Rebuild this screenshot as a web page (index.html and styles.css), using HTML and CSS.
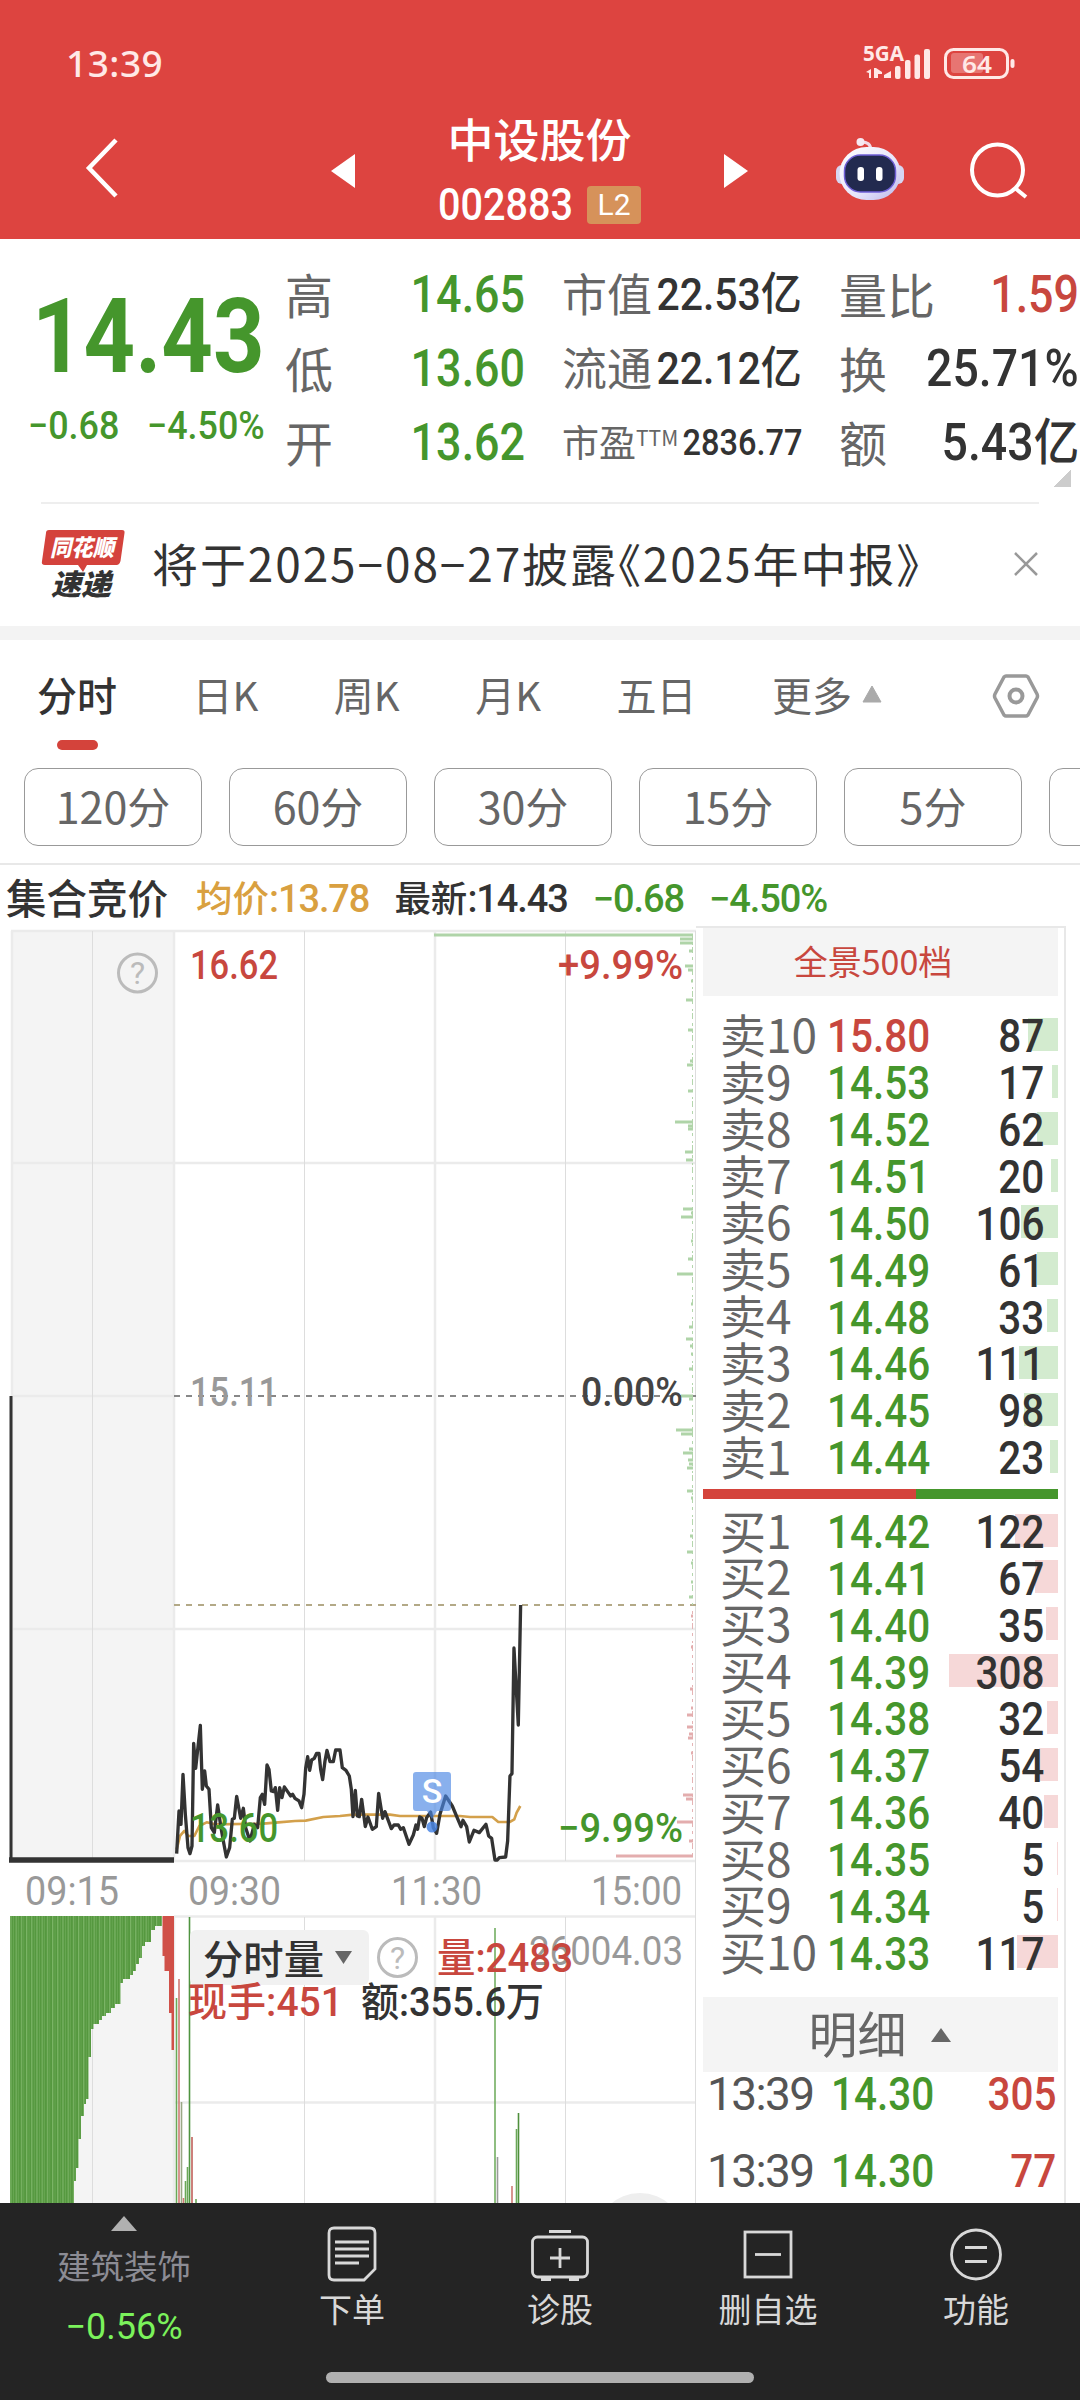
FILE: index.html
```html
<!DOCTYPE html>
<html lang="zh-CN">
<head>
    <meta charset="UTF-8">
    <meta name="viewport" content="width=device-width, initial-scale=1.0">
    <title>中设股份 002883</title>
    <link rel="stylesheet" href="styles.css">
</head>
<body>
<header class="header">
    <div class="statusbar">
        <span class="clock">13:39</span>
        <svg class="status-icons" width="156" height="40" viewBox="860 44 156 40">
            <text x="863" y="61" class="net" textLength="41" lengthAdjust="spacingAndGlyphs">5GA</text>
            <g fill="#ffe9e7">
                <path d="M866 72l5-3v9h-2v-5zM874 68h2l6 4v2h-4v4h-4z"/>
                <path d="M884 78v-3l7-4v7z"/>
                <rect x="895" y="66" width="5.5" height="13" rx="2"/>
                <rect x="905" y="60" width="5.5" height="19" rx="2"/>
                <rect x="914.500" y="54.500" width="5.500" height="24.500" rx="2"/>
                <rect x="924" y="49" width="6" height="30" rx="2"/>
                <rect x="1010.500" y="59" width="4" height="9" rx="2"/>
                <rect x="951" y="53" width="32" height="20" rx="3" opacity=".3"/>
            </g>
            <rect x="945.500" y="49.500" width="62" height="28" rx="8" fill="none" stroke="#ffe9e7" stroke-width="3"/>
            <text x="962" y="73" class="battery" textLength="30" lengthAdjust="spacingAndGlyphs">64</text>
        </svg>
    </div>
    <div class="titlebar">
        <svg class="back" width="40" height="64" viewBox="0 0 40 64"><path d="M34 3L7 31l27 28" fill="none" stroke="#fff" stroke-width="4.500"/></svg>
        <svg class="prev" width="24" height="34" viewBox="0 0 24 34"><path d="M24 0v34L0 17z" fill="#fff"/></svg>
        <div class="title">
            <div class="name">中设股份</div>
            <div class="code"><span class="num">002883</span><span class="level">L2</span></div>
        </div>
        <svg class="next" width="24" height="34" viewBox="0 0 24 34"><path d="M0 0v34l24-17z" fill="#fff"/></svg>
        <svg class="robot" width="70" height="66" viewBox="835 136 70 66">
            <defs>
                <linearGradient id="head" x1="0" y1="0" x2="1" y2="1">
                    <stop offset="0" stop-color="#fff"/>
                    <stop offset=".6" stop-color="#e6e4fa"/>
                    <stop offset="1" stop-color="#b9b6ea"/>
                </linearGradient>
            </defs>
            <path d="M860 142q11-1 11 9" fill="none" stroke="#f3d9e6" stroke-width="3"/>
            <circle cx="860.500" cy="142" r="4" fill="#f6e9f2"/>
            <rect x="836" y="165" width="12" height="19" rx="6" fill="#d6d6f2"/>
            <rect x="892" y="165" width="12" height="19" rx="6" fill="#d6d6f2"/>
            <rect x="839.500" y="147" width="61" height="53" rx="27" fill="url(#head)"/>
            <rect x="844.500" y="155" width="51" height="37" rx="16" fill="#222a4f" stroke="#6f5fd6" stroke-width="1.500"/>
            <rect x="857.500" y="167" width="6.500" height="14" rx="3" fill="#fff"/>
            <rect x="876" y="167" width="6.500" height="14" rx="3" fill="#fff"/>
        </svg>
        <svg class="search" width="62" height="62" viewBox="968 140 62 62">
            <circle cx="997.500" cy="170" r="25.500" fill="none" stroke="#fff" stroke-width="4"/>
            <path d="M1015 188l11 9" stroke="#fff" stroke-width="4"/>
        </svg>
    </div>
</header>

<!-- 行情 -->
<section class="quote">
    <div class="last">
        <div class="price num">14.43</div>
        <div class="change"><span class="num">−0.68</span><span class="num">−4.50%</span></div>
    </div>
    <div class="stats">
        <div class="stat"><label>高</label><b class="num green">14.65</b></div>
        <div class="stat mid"><label>市值</label><b class="num">22.53<i>亿</i></b></div>
        <div class="stat"><label>量比</label><b class="num red">1.59</b></div>
        <div class="stat"><label>低</label><b class="num green">13.60</b></div>
        <div class="stat mid"><label>流通</label><b class="num">22.12<i>亿</i></b></div>
        <div class="stat"><label>换</label><b class="num wide">25.71%</b></div>
        <div class="stat"><label>开</label><b class="num green">13.62</b></div>
        <div class="stat small"><label>市盈<sup>TTM</sup></label><b class="num">2836.77</b></div>
        <div class="stat"><label>额</label><b class="num wide">5.43<i>亿</i></b></div>
    </div>
    <span class="corner"></span>
</section>

<section class="notice">
    <svg width="84" height="70" viewBox="41 529 84 70">
        <path d="M49 530h73q3 0 2.500 3l-4 28q-1 4-4 4H87l-4 7-5-7H45q-4 0-3-4l4-28q0-3 3-3z" fill="#d4423c"/>
        <text x="50" y="556" class="logo-top" textLength="64" lengthAdjust="spacingAndGlyphs">同花顺</text>
        <text x="51" y="595" class="logo-bottom" textLength="60" lengthAdjust="spacingAndGlyphs">速递</text>
    </svg>
    <p>将于2025−08−27披露<span>《</span>2025年中报》</p>
    <svg class="close" width="24" height="24" viewBox="0 0 24 24"><path d="M1 1l22 22M23 1L1 23" stroke="#999" stroke-width="2.500"/></svg>
</section>

<nav class="tabs">
    <a class="active">分时</a><a>日K</a><a>周K</a><a>月K</a><a>五日</a>
    <a class="more">更多<svg width="20" height="18" viewBox="0 0 20 18"><path d="M10 1l9 16H1z" fill="#aaa" stroke="#aaa" stroke-linejoin="round"/></svg></a>
    <svg class="setting" width="48" height="44" viewBox="0 0 48 44">
        <path d="M14 2h20q1 0 2 1l9 17q1 2 0 4l-9 17q-1 1-2 1H14q-1 0-2-1L3 24q-1-2 0-4l9-17q1-1 2-1z" fill="none" stroke="#999" stroke-width="3.500"/>
        <circle cx="24" cy="22" r="6.500" fill="none" stroke="#999" stroke-width="4"/>
    </svg>
</nav>
<div class="chips">
    <span>120分</span><span>60分</span><span>30分</span><span>15分</span><span>5分</span><span></span>
</div>

<div class="info">
    <b>集合竞价</b>
    <span class="orange">均价<em>:13.78</em></span>
    <span>最新<em>:14.43</em></span>
    <span class="green"><em>−0.68</em></span>
    <span class="green"><em>−4.50%</em></span>
</div>

<main class="board">
    <svg class="chart" width="696" height="1278" viewBox="0 925 696 1278">
        <defs>
            <pattern id="stripes" width="5.200" height="10" patternUnits="userSpaceOnUse">
                <rect width="5.200" height="10" fill="#55983f"/>
                <rect width="1.200" height="10" fill="#7cb567"/>
                <rect x="2.600" width=".7" height="10" fill="#6cab56"/>
            </pattern>
        </defs>
        <!-- 集合竞价背景和网格 -->
        <path d="M11 930h162v930H11zM11 1916h162v287H11z" fill="#f4f4f4"/>
        <g class="grid">
            <path d="M11 930H696M11 1162H696M11 1395H174M11 1628H696M11 1860H696M174 1915.500H696M174 2101.500H696"/>
            <path d="M12 930V1860M174 930V1860M435 930V1860M174 1916V2203M435 1916V2203"/>
            <path class="thin" d="M92.500 930V1860M304.500 930V1860M565.500 930V1860M92.500 1916V2203M304.500 1916V2203M565.500 1916V2203M695.500 930V2203"/>
        </g>
        <path d="M174 1395H696" stroke="#888" stroke-width="2" stroke-dasharray="6 6"/>
        <path d="M174 1604H696" stroke="#b3a987" stroke-width="2" stroke-dasharray="6 6"/>
        <g id="depth"></g>

        <!-- 均价线和价格线 -->
        <g transform="translate(160 1680) scale(.3333)" fill="none" stroke-linejoin="round">
            <polyline stroke="#d3a04b" stroke-width="8" points="50,505 60,465 73,450 85,465 103,465 118,435 140,424 165,430 310,428 355,424 405,420 437,419 490,408 540,405 580,401 690,401 720,405 900,405 930,408 997,408 1015,423 1050,423 1063,415 1070,395 1081,375"/>
            <polyline stroke="#333" stroke-width="10" points="50,518 57,390 63,430 69,280 76,400 84,500 90,518 96,495 101,187 107,262 121,133 127,325 134,270 139,315 147,325 154,440 163,455 173,372 183,440 190,480 199,528 209,500 217,415 223,412 230,346 242,412 250,382 257,440 270,480 283,430 293,440 301,350 307,340 314,370 321,252 327,265 334,330 341,332 346,320 353,388 359,320 366,350 373,318 385,335 392,345 398,340 405,352 417,360 425,380 432,340 437,262 443,227 449,268 455,237 463,232 470,217 477,217 482,265 488,296 495,240 501,208 510,242 520,242 527,207 540,207 547,260 558,268 568,285 574,325 579,407 586,328 592,405 598,407 605,355 616,437 624,408 637,445 649,437 656,337 668,412 675,392 694,443 702,432 715,432 722,445 730,440 747,490 760,462 768,432 773,445 779,408 786,412 793,437 800,410 812,393 820,440 830,457 840,400 857,345 877,375 903,437 909,418 920,437 928,483 942,448 958,455 978,430 986,465 995,472 1005,537 1012,537 1018,530 1037,528 1043,480 1050,285 1056,278 1062,-99 1075,132 1082,-228"/>
        </g>
        <path d="M11 1395V1859" stroke="#333" stroke-width="3"/>
        <path d="M9 1859H174" stroke="#333" stroke-width="5.500"/>

        <!-- 卖出标记 -->
        <g fill="#4a86e4">
            <path d="M416 1771h32q3 0 3 3v33q0 3-3 3h-11l-5 8-5-8h-11q-3 0-3-3v-33q0-3 3-3z" opacity=".65"/>
            <circle cx="432" cy="1826" r="5.500" opacity=".85"/>
        </g>
        <text x="432" y="1802" class="mark">S</text>

        <g class="label">
            <text x="190" y="978" textLength="88" lengthAdjust="spacingAndGlyphs" fill="#c8473e">16.62</text>
            <text x="558" y="978" textLength="125" lengthAdjust="spacingAndGlyphs" fill="#c8473e">+9.99%</text>
            <text x="190" y="1405" textLength="88" lengthAdjust="spacingAndGlyphs" fill="#999">15.11</text>
            <text x="581" y="1405" textLength="102" lengthAdjust="spacingAndGlyphs" fill="#444">0.00%</text>
            <text x="190" y="1841" textLength="88" lengthAdjust="spacingAndGlyphs" fill="#45962c">13.60</text>
            <text x="558" y="1841" textLength="125" lengthAdjust="spacingAndGlyphs" fill="#45962c">−9.99%</text>
        </g>
        <g class="axis">
            <text x="25" y="1904" textLength="94" lengthAdjust="spacingAndGlyphs">09:15</text>
            <text x="188" y="1904" textLength="93" lengthAdjust="spacingAndGlyphs">09:30</text>
            <text x="391" y="1904" textLength="91" lengthAdjust="spacingAndGlyphs">11:30</text>
            <text x="591" y="1904" textLength="91" lengthAdjust="spacingAndGlyphs">15:00</text>
        </g>
        <g class="help">
            <circle cx="137.500" cy="972" r="19"/>
            <text x="137.500" y="983">?</text>
        </g>

        <!-- 成交量 -->
        <path fill="url(#stripes)" d="M10 1915V2203H74V2180H76V2167H78.500V2138H81V2115H84V2103H86V2098H88.500V2056H91V2028H93.500V2023H99V2019H102V2015H106V2012H111V2007H115V2003H120.500V1982H123V1978H130V1974H133V1970H136V1963H139V1957H142V1945H145V1941H151V1929H155V1925H162V1915z"/>
        <path d="M162.500 1915H174V2049H171.500V2012H169V1970H164.500V1955H162.500z" fill="#d05048"/>
        <g id="volume"></g>
        <circle cx="640" cy="2236" r="44" fill="#eee"/>

        <rect x="190" y="1929" width="179" height="55" rx="6" fill="#f1f1f1"/>
        <path d="M335 1950h17l-8.500 13z" fill="#666"/>
        <g class="help">
            <circle cx="397.500" cy="1956.500" r="19"/>
            <text x="397.500" y="1967.500">?</text>
        </g>
        <path d="M495 1927V2203" stroke="#6aa857" stroke-width="1.500"/>
        <g class="legend">
            <text x="203" y="1973" textLength="121" lengthAdjust="spacingAndGlyphs" fill="#333">分时量</text>
            <text x="529" y="1964" textLength="154" lengthAdjust="spacingAndGlyphs" class="max">26004.03</text>
            <text x="437" y="1971" textLength="136" lengthAdjust="spacingAndGlyphs" fill="#c8473e">量<tspan class="n">:2483</tspan></text>
            <text x="188" y="2015" textLength="155" lengthAdjust="spacingAndGlyphs" fill="#c8473e">现手<tspan class="n">:451</tspan></text>
            <text x="361" y="2015" textLength="183" lengthAdjust="spacingAndGlyphs" fill="#333">额<tspan class="n">:355.6</tspan>万</text>
        </g>
    </svg>

    <!-- 盘口 -->
    <aside class="book">
        <div class="panorama">全景500档</div>
        <div class="rows sell" id="sell"></div>
        <div class="ratio"><span></span></div>
        <div class="rows buy" id="buy"></div>
        <div class="detail-head"><span>明细</span><svg width="20" height="14" viewBox="0 0 20 14"><path d="M10 0l10 14H0z" fill="#666"/></svg></div>
        <div class="trade"><span class="time">13:39</span><b class="num green">14.30</b><b class="num red">305</b></div>
        <div class="trade"><span class="time">13:39</span><b class="num green">14.30</b><b class="num red">77</b></div>
    </aside>
</main>

<footer class="bottom">
    <div class="items">
        <div class="sector">
            <svg width="26" height="15" viewBox="0 0 26 15"><path d="M13 0l13 15H0z" fill="#b0b0b0"/></svg>
            <span>建筑装饰</span>
            <em>−0.56%</em>
        </div>
        <div class="item">
            <svg width="60" height="58" viewBox="0 0 60 58">
                <path d="M12 3h36q5 0 5 5v36l-11 11H12q-5 0-5-5V8q0-5 5-5z"/>
                <path d="M13 17h34M13 24h34M13 31h34M13 38h24"/>
            </svg>
            <span>下单</span>
        </div>
        <div class="item">
            <svg width="60" height="58" viewBox="0 0 60 58">
                <rect x="2.500" y="12" width="55" height="40" rx="5"/>
                <path d="M19 6.500h22M30 23v20M20 33h20M11 54.500h10M39 54.500h10"/>
            </svg>
            <span>诊股</span>
        </div>
        <div class="item">
            <svg width="60" height="58" viewBox="0 0 60 58">
                <rect x="7" y="7" width="46" height="45"/>
                <path d="M17 29.500h26"/>
            </svg>
            <span>删自选</span>
        </div>
        <div class="item">
            <svg width="60" height="58" viewBox="0 0 60 58">
                <circle cx="30" cy="29.500" r="24.500"/>
                <path d="M19 22.500h22M19 36.500h22"/>
            </svg>
            <span>功能</span>
        </div>
    </div>
    <div class="home"></div>
</footer>

<script>
    // 盘口数据: 价格, 数量, 柱宽
    const sell = [
        ["15.80", 87, 30], ["14.53", 17, 6], ["14.52", 62, 21], ["14.51", 20, 7], ["14.50", 106, 37],
        ["14.49", 61, 21], ["14.48", 33, 11], ["14.46", 111, 39], ["14.45", 98, 34], ["14.44", 23, 8]
    ];
    const buy = [
        ["14.42", 122, 43], ["14.41", 67, 23], ["14.40", 35, 12], ["14.39", 308, 109], ["14.38", 32, 11],
        ["14.37", 54, 19], ["14.36", 40, 14], ["14.35", 5, 1], ["14.34", 5, 1], ["14.33", 117, 41]
    ];

    function row(name, [price, count, width]) {
        const color = parseFloat(price) > 15.11 ? "red" : "green";
        return `<div class="row"><span class="bar" style="width:${width}px"></span><label>${name}</label><b class="num ${color}">${price}</b><b class="num count">${count}</b></div>`;
    }

    document.getElementById("sell").innerHTML = sell.map((r, i) => row("卖" + (10 - i), r)).join("");
    document.getElementById("buy").innerHTML = buy.map((r, i) => row("买" + (i + 1), r)).join("");

    // 右侧筹码: y, 长度
    const depthGreen = [
        [934, 259], [938, 13], [942, 13], [950, 4], [965, 8], [969, 5], [980, 2], [999, 7], [1029, 5], [1060, 3],
        [1064, 6], [1090, 5], [1121, 18], [1125, 5], [1128, 5], [1151, 8], [1159, 7], [1208, 10], [1212, 2],
        [1216, 12], [1240, 2], [1258, 5], [1273, 16], [1303, 2], [1326, 4], [1338, 7], [1345, 3], [1353, 2],
        [1368, 4], [1395, 12], [1398, 4], [1429, 17], [1433, 12], [1448, 4], [1452, 10], [1459, 5], [1463, 4],
        [1467, 6], [1490, 6], [1497, 2], [1535, 3], [1551, 6], [1562, 2], [1581, 2], [1596, 4]
    ];
    const depthRed = [
        [1615, 2], [1646, 2], [1688, 3], [1707, 2], [1714, 6], [1726, 6], [1733, 4], [1737, 5], [1752, 2],
        [1794, 10], [1798, 7], [1821, 16], [1840, 4], [1855, 77]
    ];
    const bars = (list, color) => list.map(([y, w]) => `<rect x="${693 - w}" y="${y - 1.5}" width="${w}" height="3" fill="${color}"/>`).join("");
    document.getElementById("depth").innerHTML =
        '<path d="M692.500 934V1604" stroke="#b4d6ad" stroke-dasharray="3 5 2 2 6 4"/>' +
        '<path d="M692.500 1610V1856" stroke="#e5b4b5" stroke-dasharray="3 5 2 2 6 4"/>' +
        bars(depthGreen, "#afd4a8") + bars(depthRed, "#e3adae");

    // 成交量柱: x, 顶部y, 颜色
    const volume = [
        [176.5, 1997, "#6aa857"], [179, 1978, "#cf7a74"], [181.5, 2101, "#9aa886"], [183.5, 2197, "#cf7a74"],
        [185.5, 2180, "#6aa857"], [187.5, 2166, "#6aa857"], [189.5, 1916, "#4f9440"], [192, 2136, "#c0605a"],
        [196, 2198, "#6aa857"], [497.5, 2156, "#9a9a9a"], [512, 2185, "#cf7a74"], [516.5, 2128, "#6aa857"],
        [518.5, 2112, "#4f8f3c"]
    ];
    document.getElementById("volume").innerHTML = volume.map(([x, y, c]) => `<path d="M${x} ${y}V2203" stroke="${c}" stroke-width="1.600"/>`).join("");
</script>
</body>
</html>
```
FILE: styles.css
```css
* {
    box-sizing: border-box;
}

body {
    margin: 0;
    width: 1080px;
    height: 2400px;
    overflow: hidden;
    display: flex;
    flex-direction: column;
    background: #fff;
    color: #333;
    font-family: "Noto Sans CJK SC", sans-serif;
    white-space: nowrap;
}

svg {
    display: block;
    flex: none;
}

.num,
em {
    font-family: Roboto, "Noto Sans CJK SC", sans-serif;
    font-weight: 500;
    font-style: normal;
}

/* 数字压窄 */
.num {
    display: inline-block;
    transform: scaleX(0.88);
    transform-origin: left;
}

.green {
    color: #45962c;
}

.red {
    color: #c8473e;
}

.orange {
    color: #d9a040;
}

/* 顶部 */
.header {
    height: 239px;
    flex: none;
    background: #dd4440;
    color: #fff;
}

.statusbar {
    height: 110px;
    padding: 44px 64px 0 66px;
    display: flex;
    justify-content: space-between;
}

.clock {
    font: 500 37px/38px "Noto Sans", sans-serif;
    letter-spacing: 0.5px;
    color: #ffe9e7;
}

.net {
    font: 700 21px "Noto Sans", sans-serif;
    fill: #ffe9e7;
}

.battery {
    font: 600 24px "Noto Sans", sans-serif;
    fill: #ffe9e7;
}

.titlebar {
    display: flex;
    align-items: flex-start;
    padding-left: 82px;
}

.back {
    margin-top: 27px;
}

.prev {
    margin: 44px 0 0 209px;
}

.title {
    width: 369px;
    display: flex;
    flex-direction: column;
    align-items: center;
}

.name {
    margin-top: -1px;
    font-size: 46px;
    font-weight: 500;
    line-height: 56px;
}

.code {
    display: flex;
    align-items: center;
    margin-top: 20px;
    height: 40px;
    font-size: 45px;
    line-height: 40px;
}

.code .num {
    width: 149px;
}

.level {
    width: 54px;
    height: 38px;
    border-radius: 4px;
    background: #d6925a;
    font: 400 30px/38px Roboto, sans-serif;
    text-align: center;
}

.next {
    margin-top: 44px;
}

.robot {
    margin: 26px 0 0 87px;
}

.search {
    margin: 30px 0 0 63px;
}

/* 行情 */
.quote {
    position: relative;
    height: 265px;
    flex: none;
    display: flex;
    padding-top: 19px;
}

.quote::after {
    content: "";
    position: absolute;
    left: 41px;
    right: 41px;
    bottom: 0;
    height: 2px;
    background: #eee;
}

.last {
    width: 285px;
    color: #45962c;
}

.price {
    margin: 24px 0 0 32px;
    font-size: 104px;
    font-weight: 700;
    line-height: 110px;
    transform: scaleX(0.865);
}

.change {
    display: flex;
    padding-left: 28px;
    margin-top: 14px;
    font-size: 39px;
    line-height: 40px;
}

.change .num {
    transform: scaleX(0.92);
}

.change .num:first-child {
    width: 119px;
}

.stats {
    display: grid;
    grid-template-columns: repeat(3, 239px);
    grid-auto-rows: 74px;
    column-gap: 38px;
}

.stat {
    display: flex;
    justify-content: space-between;
    align-items: center;
    font-size: 51px;
    line-height: 74px;
}

.stat label {
    width: 0;
    margin-top: -5px;
    font-size: 48px;
    color: #666;
}

.stat .num {
    position: relative;
    left: 1px;
    transform-origin: right;
}

.stat .wide {
    transform: scaleX(0.91);
}

.stat i {
    font-style: normal;
    font-size: 50px;
    line-height: 0;
}

.stat.mid,
.stat.mid label,
.stat.mid i {
    font-size: 45px;
}

.stat.mid .num {
    transform: scaleX(0.91);
}

.stat.small,
.stat.small label {
    font-size: 37px;
}

.stat sup {
    font-size: 21px;
    line-height: 0;
    vertical-align: 11px;
}

.corner {
    position: absolute;
    right: 9px;
    bottom: 17px;
    width: 17px;
    height: 17px;
    background: linear-gradient(135deg, transparent 50%, #ccc 50%);
}

.notice {
    height: 136px;
    flex: none;
    display: flex;
    align-items: flex-start;
    padding: 25px 42px 0 41px;
    border-bottom: 14px solid #f3f3f3;
}

.notice p {
    margin: 5px 0 0 27px;
    flex: 1;
    font-size: 46px;
    line-height: 56px;
    letter-spacing: 1.9px;
}

.notice p span {
    margin-left: -23px;
}

.notice .close {
    margin-top: 23px;
}

.logo-top {
    font: italic 900 23px "Noto Sans CJK SC", sans-serif;
    fill: #fff;
}

.logo-bottom {
    font: italic 900 29px "Noto Sans CJK SC", sans-serif;
    fill: #333;
}

/* 周期切换 */
.tabs {
    display: flex;
    align-items: flex-start;
    height: 128px;
    flex: none;
    padding: 29px 40px 0 37px;
    font-size: 40px;
    line-height: 50px;
    color: #666;
}

.tabs a {
    margin-right: 75.5px;
}

.tabs .active {
    position: relative;
    color: #333;
    font-weight: 500;
}

.tabs .active::after {
    content: "";
    position: absolute;
    left: 20px;
    top: 71px;
    width: 41px;
    height: 10px;
    border-radius: 5px;
    background: #d4433b;
}

.tabs .more {
    display: flex;
    align-items: center;
    gap: 10px;
    margin-right: auto;
}

.tabs .setting {
    margin-top: 5px;
}

.chips {
    display: flex;
    flex: none;
    gap: 27px;
    height: 97px;
    padding-left: 24px;
    border-bottom: 2px solid #e8e8e8;
    overflow: hidden;
}

.chips span {
    flex: none;
    width: 178px;
    height: 78px;
    border: 1.5px solid #999;
    border-radius: 14px;
    font-size: 43px;
    line-height: 72px;
    text-align: center;
    color: #666;
}

.info {
    display: flex;
    flex: none;
    height: 61px;
    padding: 6px 0 0 6px;
    font-size: 36.5px;
    line-height: 52px;
    font-weight: 500;
}

.info b {
    font-size: 40.5px;
    font-weight: 500;
    margin-right: 28px;
}

.info span {
    margin-right: 25px;
}

.info em {
    font-size: 38px;
    letter-spacing: -1.1px;
}

/* 分时图 */
.board {
    display: flex;
    height: 1277px;
    flex: none;
}

.grid path {
    stroke: #ebebeb;
    stroke-width: 2.5;
}

.grid .thin {
    stroke: #ddd;
    stroke-width: 1;
}

.label {
    font: 500 40px Roboto, sans-serif;
}

.axis,
.max {
    font: 400 41px Roboto, sans-serif;
    fill: #999;
}

.mark {
    font: 500 34px Roboto, sans-serif;
    fill: #fff;
    text-anchor: middle;
}

.help circle {
    fill: none;
    stroke: #bbb;
    stroke-width: 3;
}

.help text {
    font: 400 32px Roboto, sans-serif;
    fill: #bbb;
    text-anchor: middle;
}

.legend {
    font: 500 40px "Noto Sans CJK SC", sans-serif;
}

.legend .n {
    font-family: Roboto, sans-serif;
}

/* 盘口 */
.book {
    width: 370px;
    padding: 0 6px 0 7px;
    border: 1px solid #e8e8e8;
    border-width: 2px 2px 0 0;
}

.panorama {
    height: 68px;
    background: #f4f4f4;
    color: #c8473e;
    font-size: 34px;
    line-height: 66px;
    text-align: center;
    padding-right: 15px;
}

.rows {
    padding-top: 17px;
}

.row {
    position: relative;
    height: 46.86px;
    display: flex;
    align-items: center;
    font-size: 46px;
    line-height: 46px;
}

.row .bar {
    position: absolute;
    right: 0;
    top: 5px;
    height: 33px;
    background: #d3ebcf;
}

.buy .bar {
    background: #f6d8d8;
}

.row label {
    width: 107px;
    margin-top: -7px;
    padding-left: 17px;
    font-size: 46px;
    color: #666;
}

.row .num,
.trade .num {
    position: relative;
    margin-left: 17px;
}

.row .count,
.trade .num:last-child {
    margin: 0 14px 0 auto;
    transform-origin: right;
}

.ratio {
    height: 10px;
    margin-top: 7px;
    background: #45962c;
}

.ratio span {
    display: block;
    width: 213px;
    height: 10px;
    background: #d4433b;
}

.buy {
    padding-top: 10px;
}

.detail-head {
    display: flex;
    align-items: center;
    justify-content: center;
    gap: 24px;
    height: 75px;
    margin-top: 20px;
    padding-right: 2px;
    background: #f4f4f4;
    color: #666;
    font-size: 49px;
    line-height: 66px;
}

.detail-head span {
    margin-top: -5px;
}

.trade {
    display: flex;
    align-items: center;
    height: 44px;
    margin-bottom: 33px;
    font-size: 46px;
    line-height: 44px;
}

.trade .time {
    width: 105px;
    padding-left: 4px;
    font-family: Roboto, sans-serif;
    letter-spacing: -1.6px;
    color: #555;
}

.trade .num {
    margin-left: 23px;
}

.trade .num:last-child {
    margin-right: 2px;
}

/* 底部 */
.bottom {
    position: relative;
    height: 197px;
    flex: none;
    background: #242424;
}

.items {
    display: flex;
}

.sector {
    width: 248px;
    display: flex;
    flex-direction: column;
    align-items: center;
    padding-top: 13px;
    font-size: 33.5px;
    line-height: 44px;
    color: #8c8c94;
}

.sector span {
    margin-top: 12px;
}

.sector em {
    margin-top: 18px;
    color: #7bf25b;
    font-size: 36px;
    font-weight: 400;
}

.item {
    width: 208px;
    display: flex;
    flex-direction: column;
    align-items: center;
    padding-top: 22px;
    font-size: 33px;
    line-height: 44px;
    color: #d8d8d8;
}

.item span {
    margin-top: 3px;
}

.item svg {
    fill: none;
    stroke: #d8d8d8;
    stroke-width: 2.8;
}

.home {
    position: absolute;
    left: 326px;
    bottom: 17px;
    width: 428px;
    height: 11px;
    border-radius: 6px;
    background: #b0b0b0;
}
```
